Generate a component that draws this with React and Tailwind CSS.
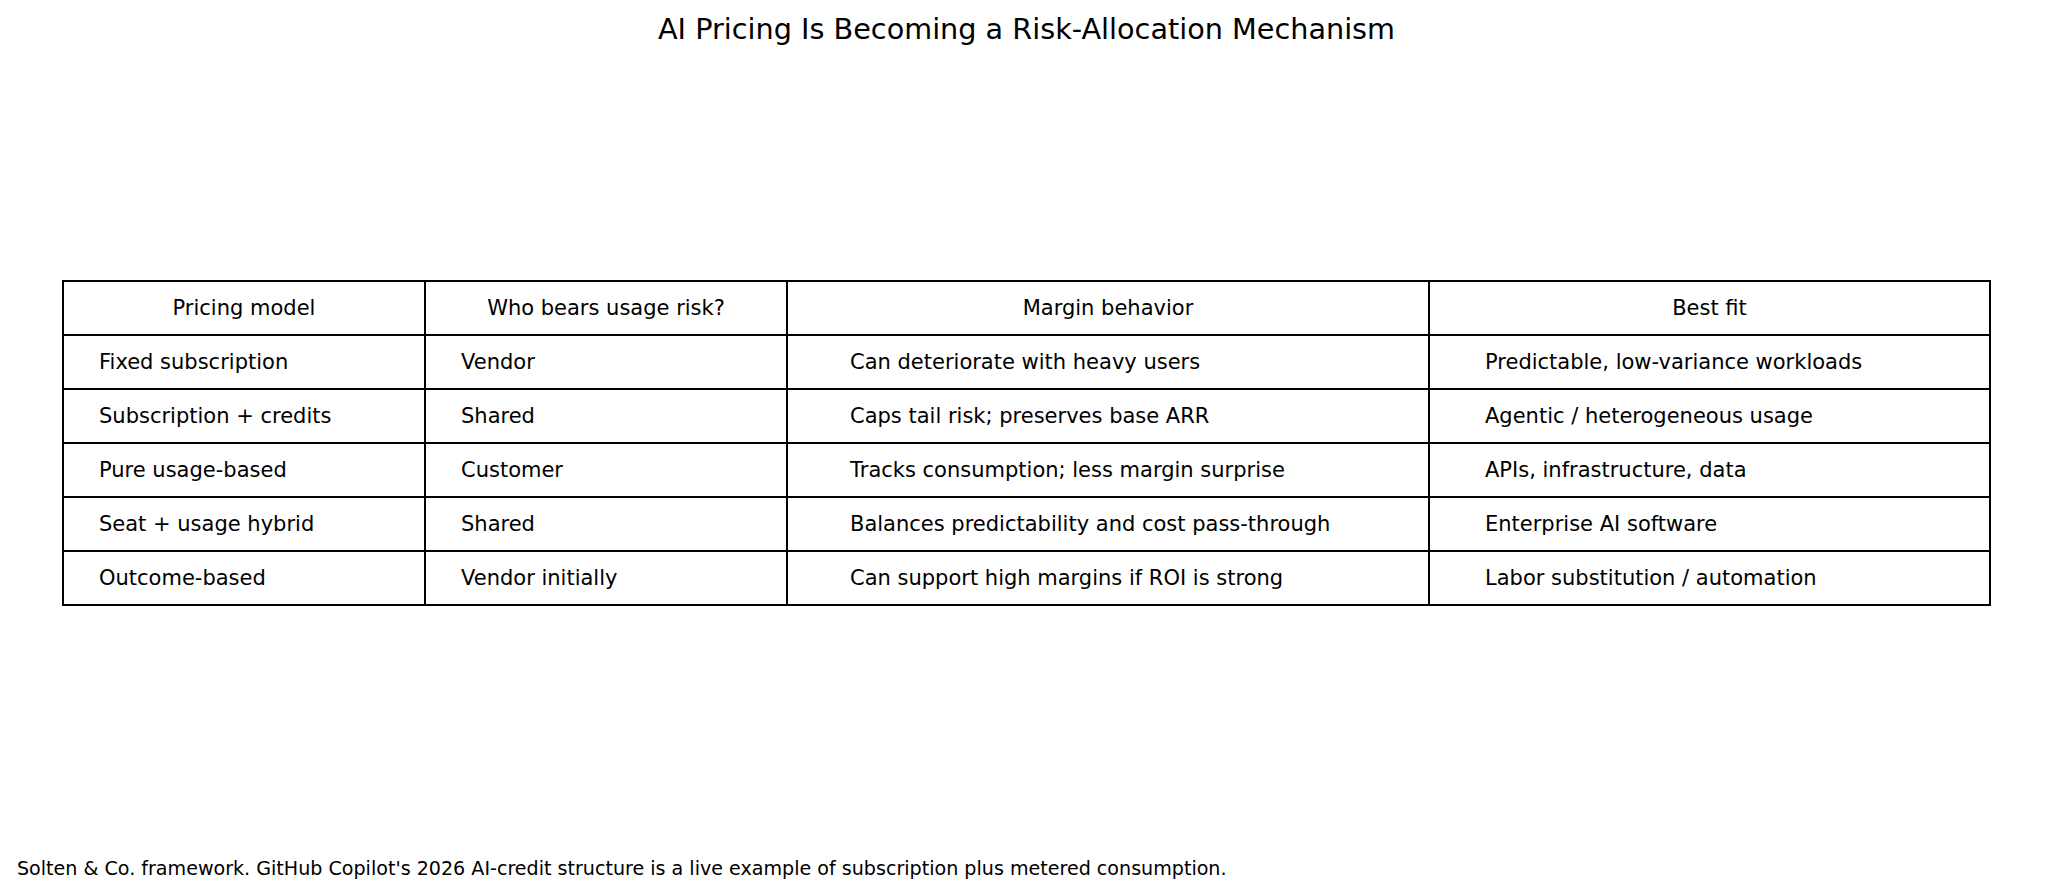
import React from "react";

const rows = [
  ["Fixed subscription", "Vendor", "Can deteriorate with heavy users", "Predictable, low-variance workloads"],
  ["Subscription + credits", "Shared", "Caps tail risk; preserves base ARR", "Agentic / heterogeneous usage"],
  ["Pure usage-based", "Customer", "Tracks consumption; less margin surprise", "APIs, infrastructure, data"],
  ["Seat + usage hybrid", "Shared", "Balances predictability and cost pass-through", "Enterprise AI software"],
  ["Outcome-based", "Vendor initially", "Can support high margins if ROI is strong", "Labor substitution / automation"],
];

const headers = ["Pricing model", "Who bears usage risk?", "Margin behavior", "Best fit"];
const pads = ["pl-[35px]", "pl-[35px]", "pl-[62px]", "pl-[55px]"];

export default function App() {
  return (
    <div
      className="w-[2048px] h-[894px] bg-white text-black flex flex-col"
      style={{ fontFamily: '"DejaVu Sans", sans-serif' }}
    >
      <div className="pt-[12px] pl-[5px] h-[34px] box-content text-center text-[28.7px] leading-[34px]">
        AI Pricing Is Becoming a Risk-Allocation Mechanism
      </div>
      <div className="mt-[234px] ml-[62px]">
        <table className="border-collapse text-[21px] leading-[25px]">
          <colgroup>
            <col className="w-[362px]" />
            <col className="w-[362px]" />
            <col className="w-[642px]" />
            <col className="w-[561px]" />
          </colgroup>
          <thead>
            <tr className="h-[54px]">
              {headers.map((h) => (
                <th key={h} className="border-2 border-black font-normal text-center p-0 align-middle">
                  {h}
                </th>
              ))}
            </tr>
          </thead>
          <tbody>
            {rows.map((r, i) => (
              <tr key={i} className="h-[54px]">
                {r.map((c, j) => (
                  <td key={j} className={`border-2 border-black text-left p-0 align-middle ${pads[j]}`}>
                    {c}
                  </td>
                ))}
              </tr>
            ))}
          </tbody>
        </table>
      </div>
      <div className="mt-auto pb-[13px] pl-[17px] text-[19.1px] leading-[24px]">
        Solten &amp; Co. framework. GitHub Copilot's 2026 AI-credit structure is a live example of subscription plus metered consumption.
      </div>
    </div>
  );
}
